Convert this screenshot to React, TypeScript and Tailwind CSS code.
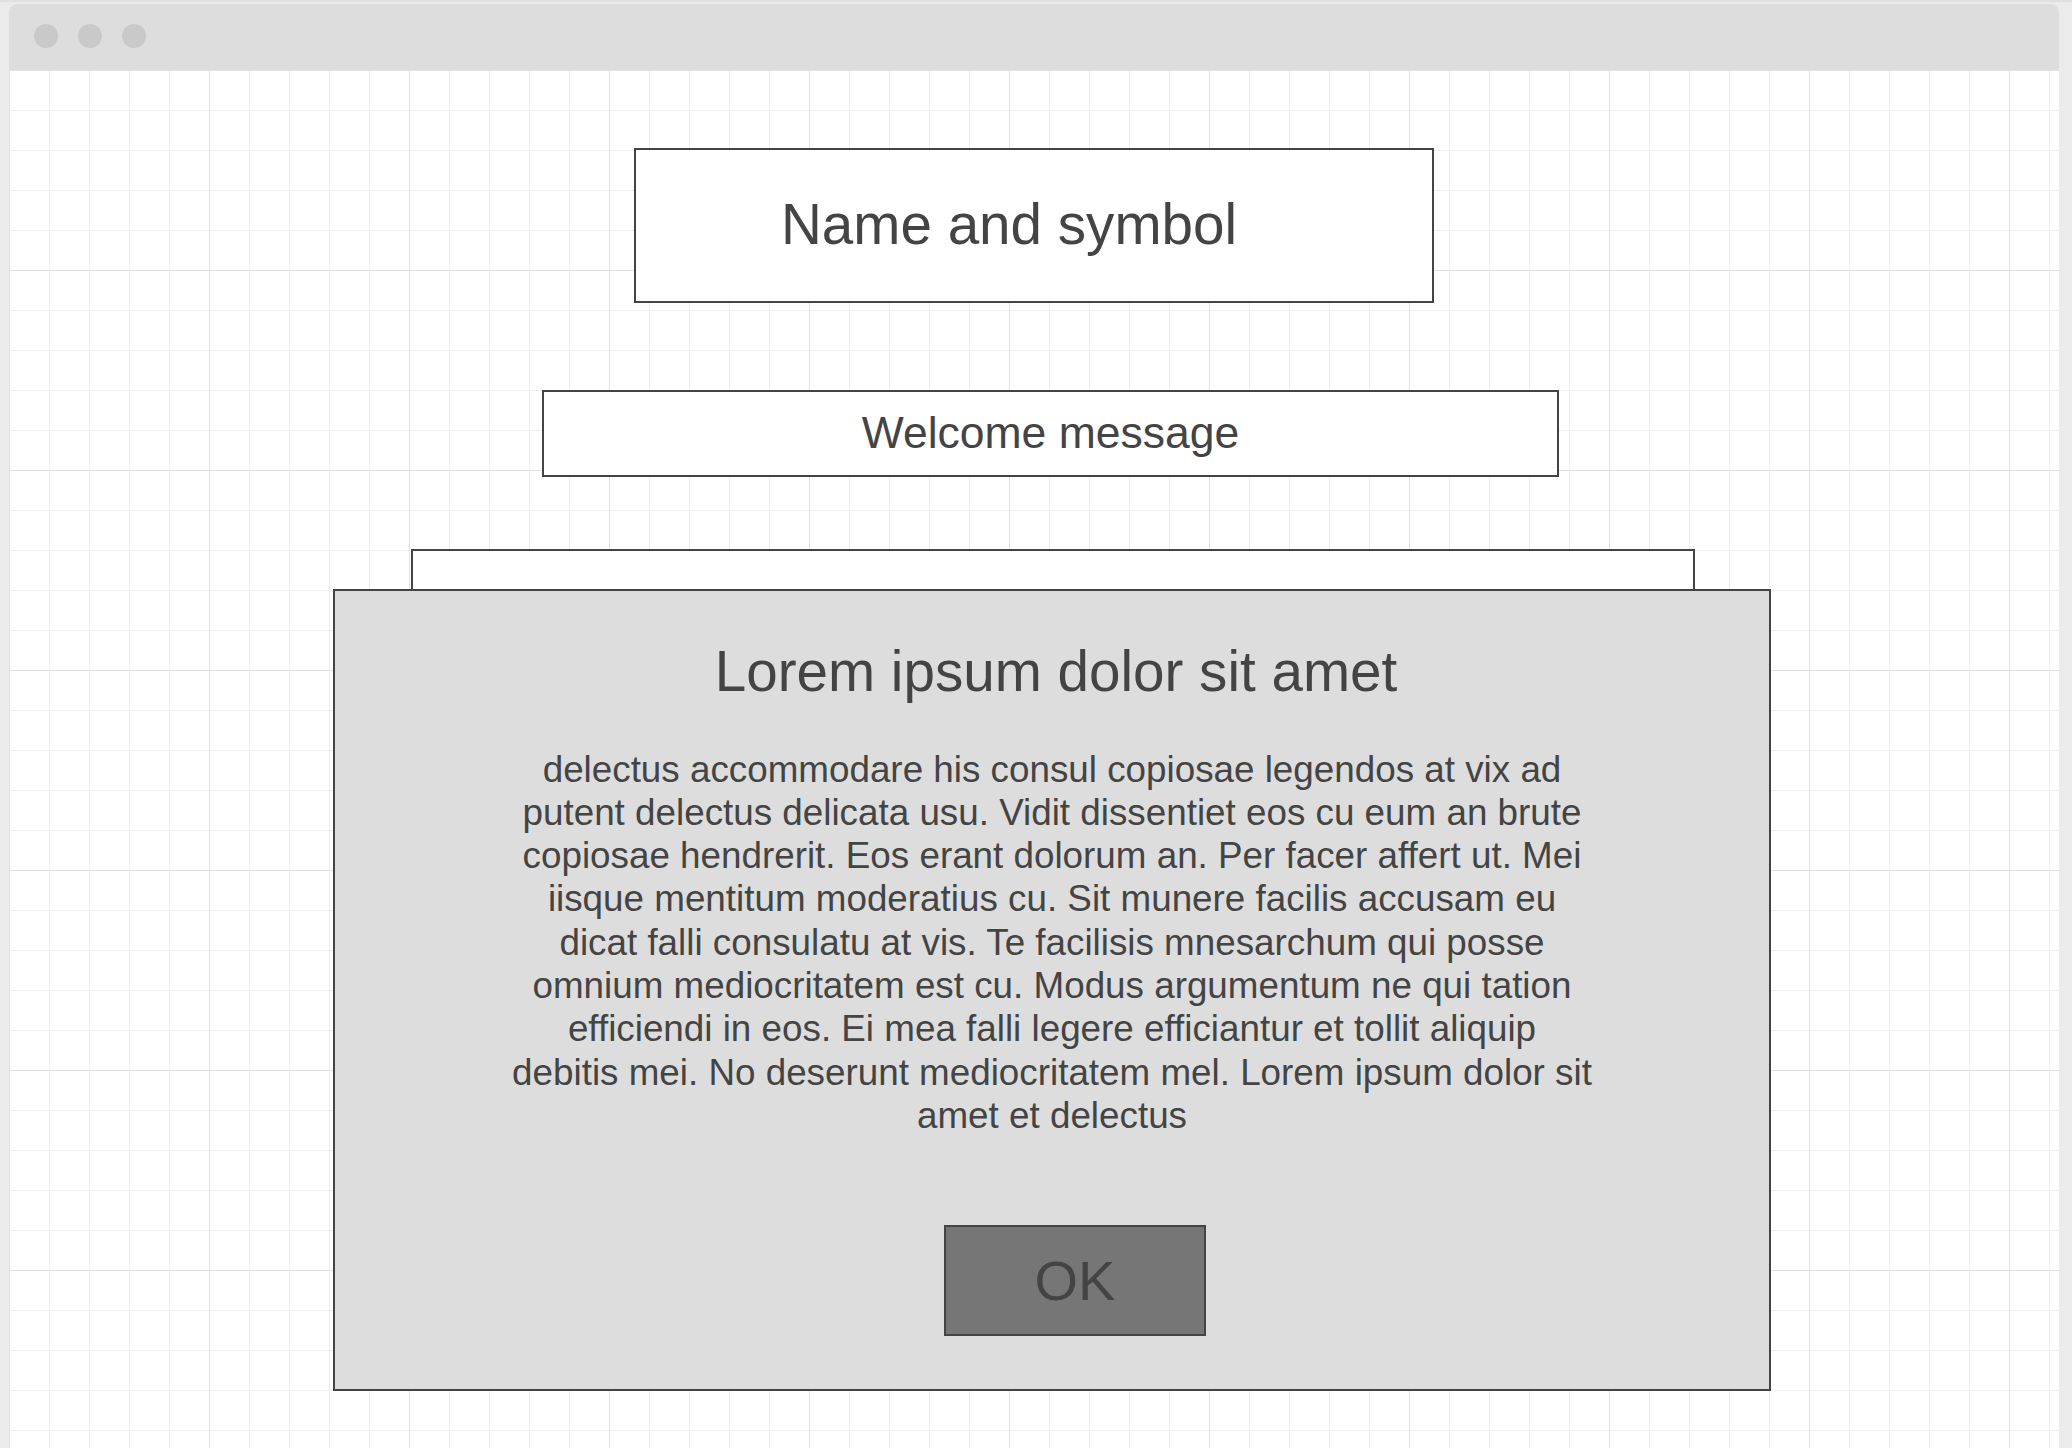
import React from "react";

const gridBg =
  "[background-image:linear-gradient(to_right,#e2e2e2_1px,transparent_1px),linear-gradient(to_bottom,#e2e2e2_1px,transparent_1px),linear-gradient(to_right,#eeeeee_1px,transparent_1px),linear-gradient(to_bottom,#eeeeee_1px,transparent_1px)] [background-size:200px_200px,200px_200px,40px_40px,40px_40px]";

const lines = [
  "delectus accommodare his consul copiosae legendos at vix ad",
  "putent delectus delicata usu. Vidit dissentiet eos cu eum an brute",
  "copiosae hendrerit. Eos erant dolorum an. Per facer affert ut. Mei",
  "iisque mentitum moderatius cu. Sit munere facilis accusam eu",
  "dicat falli consulatu at vis. Te facilisis mnesarchum qui posse",
  "omnium mediocritatem est cu. Modus argumentum ne qui tation",
  "efficiendi in eos. Ei mea falli legere efficiantur et tollit aliquip",
  "debitis mei. No deserunt mediocritatem mel. Lorem ipsum dolor sit",
  "amet et delectus",
];

export default function App() {
  return (
    <div
      className="w-[2072px] h-[1448px] overflow-hidden bg-[#ebebeb] border-t-2 border-[#e0e0e0] pt-[2px] pl-[9px] pr-[13px] text-[#444444]"
      style={{ fontFamily: '"Liberation Sans", Arial, sans-serif' }}
    >
      <div className="w-full h-full flex flex-col rounded-t-[8px] overflow-hidden bg-white">
        <div className="h-[66px] shrink-0 bg-[#dddddd] flex items-start pt-[20px] pl-[25px] gap-[20px]">
          <div className="w-6 h-6 rounded-full bg-[#c9c9c9]" />
          <div className="w-6 h-6 rounded-full bg-[#c9c9c9]" />
          <div className="w-6 h-6 rounded-full bg-[#c9c9c9]" />
        </div>
        <div className={`relative flex-1 flex flex-col items-center pt-[78px] bg-white ${gridBg}`}>
          <div className="w-[800px] h-[155px] border-2 border-[#444444] bg-white flex items-center justify-center pr-[50px]">
            <span className="text-[56.6px] leading-none">Name and symbol</span>
          </div>
          <div className="mt-[87px] ml-[33px] w-[1017px] h-[87px] border-2 border-[#444444] bg-white flex items-center justify-center">
            <span className="text-[44.5px] leading-none">Welcome message</span>
          </div>
          <div className="mt-[72px] ml-[38px] w-[1284px] h-[600px] border-2 border-[#444444] bg-white" />

          <div className="absolute left-[324px] top-[519px] w-[1438px] h-[802px] border-2 border-[#444444] bg-[#dddddd] flex flex-col items-center pt-[53px]">
            <div className="text-[56.6px] leading-none ml-[8px]">Lorem ipsum dolor sit amet</div>
            <p className="mt-[47px] w-[1200px] text-center text-[36.8px] leading-[43.3px]">
              {lines.map((l, i) => (
                <React.Fragment key={i}>
                  {l}
                  {i < lines.length - 1 && <br />}
                </React.Fragment>
              ))}
            </p>
            <div className="mt-[88px] ml-[46px] w-[262px] h-[111px] border-2 border-[#444444] bg-[#767676] flex items-center justify-center">
              <span className="text-[56px] leading-none">OK</span>
            </div>
          </div>
        </div>
      </div>
    </div>
  );
}
